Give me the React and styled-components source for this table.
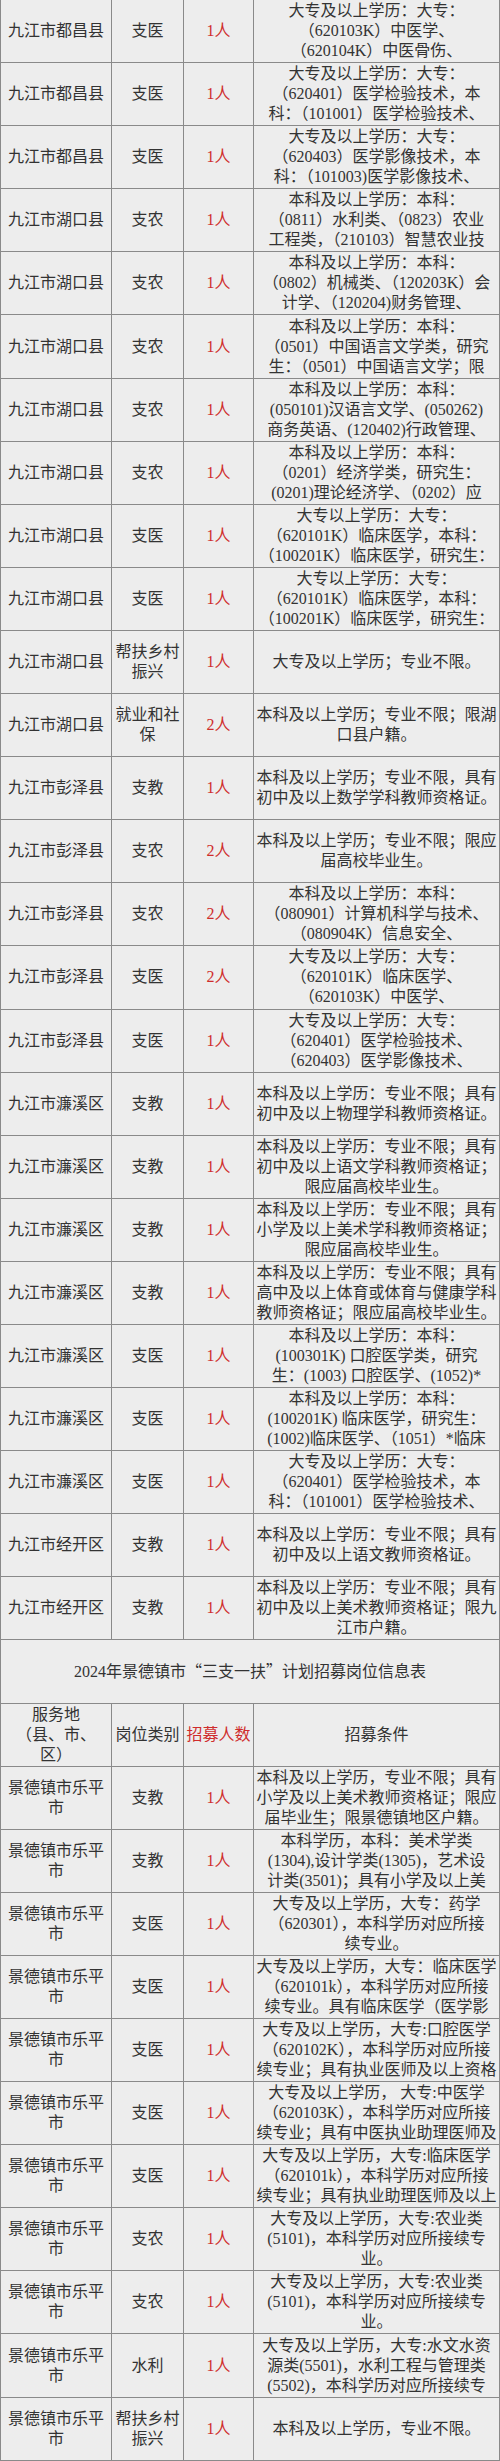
import React from 'react'
import styled, { createGlobalStyle } from 'styled-components'

const rowHeight = 2461 / 39
const lineColor = '#8a8a8a'
const paper = '#ededed'
const red = '#cf2c2c'

const GlobalStyle = createGlobalStyle`
    body {
        margin: 0;
        background: ${paper};
    }
`

const Table = styled.div`
    display: grid;
    grid-template-columns: 112px 72px 70px 246px;
    grid-auto-rows: ${rowHeight}px;
    width: 500px;
    background: ${paper};
    color: #333;
    font-family: "Liberation Serif", "Noto Sans CJK SC", serif;
    font-size: 16px;
    line-height: 20px;
`

const Cell = styled.div`
    display: flex;
    flex-direction: column;
    align-items: center;
    justify-content: center;
    overflow: hidden;
    box-sizing: border-box;
    border-right: 1px solid ${lineColor};
    border-bottom: 1px solid ${lineColor};
    text-align: center;
`

const PlaceCell = styled(Cell)`
    border-left: 1px solid ${lineColor};
`

const TypeCell = styled(Cell)``

const CountCell = styled(Cell)`
    color: ${red};
`

const TermsCell = styled(Cell)`
    padding: 0 1px;
`

const TitleCell = styled(Cell)`
    grid-column: 1 / -1;
    border-left: 1px solid ${lineColor};
`

const Quote = styled.span`
    font-family: "Noto Sans CJK SC", sans-serif;
`

const Line = styled.span`
    display: block;
    white-space: nowrap;
`

const Lines = ({ text }) => (Array.isArray(text) ? text : [text]).map((t, i) => <Line key={i}>{t}</Line>)

const jj = (county) => `九江市${county}`
const lp = ['景德镇市乐平', '市']

const jiujiang = [
    { place: jj('都昌县'), type: '支医', count: '1人', terms: ['大专及以上学历：大专：', '（620103K）中医学、', '（620104K）中医骨伤、'] },
    { place: jj('都昌县'), type: '支医', count: '1人', terms: ['大专及以上学历：大专：', '（620401）医学检验技术，本', '科：（101001）医学检验技术、'] },
    { place: jj('都昌县'), type: '支医', count: '1人', terms: ['大专及以上学历：大专：', '（620403）医学影像技术，本', '科：（101003)医学影像技术、'] },
    { place: jj('湖口县'), type: '支农', count: '1人', terms: ['本科及以上学历：本科：', '（0811）水利类、（0823）农业', '工程类，（210103）智慧农业技'] },
    { place: jj('湖口县'), type: '支农', count: '1人', terms: ['本科及以上学历：本科：', '（0802）机械类、（120203K）会', '计学、（120204)财务管理、'] },
    { place: jj('湖口县'), type: '支农', count: '1人', terms: ['本科及以上学历：本科：', '（0501）中国语言文学类，研究', '生：（0501）中国语言文学；限'] },
    { place: jj('湖口县'), type: '支农', count: '1人', terms: ['本科及以上学历：本科：', '(050101)汉语言文学、(050262)', '商务英语、(120402)行政管理、'] },
    { place: jj('湖口县'), type: '支农', count: '1人', terms: ['本科及以上学历：本科：', '（0201）经济学类，研究生：', '(0201)理论经济学、（0202）应'] },
    { place: jj('湖口县'), type: '支医', count: '1人', terms: ['大专以上学历：大专：', '（620101K）临床医学，本科：', '（100201K）临床医学，研究生：'] },
    { place: jj('湖口县'), type: '支医', count: '1人', terms: ['大专以上学历：大专：', '（620101K）临床医学，本科：', '（100201K）临床医学，研究生：'] },
    { place: jj('湖口县'), type: ['帮扶乡村', '振兴'], count: '1人', terms: ['大专及以上学历；专业不限。'] },
    { place: jj('湖口县'), type: ['就业和社', '保'], count: '2人', terms: ['本科及以上学历；专业不限；限湖', '口县户籍。'] },
    { place: jj('彭泽县'), type: '支教', count: '1人', terms: ['本科及以上学历；专业不限，具有', '初中及以上数学学科教师资格证。'] },
    { place: jj('彭泽县'), type: '支农', count: '2人', terms: ['本科及以上学历；专业不限；限应', '届高校毕业生。'] },
    { place: jj('彭泽县'), type: '支农', count: '2人', terms: ['本科及以上学历：本科：', '（080901）计算机科学与技术、', '（080904K）信息安全、'] },
    { place: jj('彭泽县'), type: '支医', count: '2人', terms: ['大专及以上学历：大专：', '（620101K）临床医学、', '（620103K）中医学、'] },
    { place: jj('彭泽县'), type: '支医', count: '1人', terms: ['大专及以上学历：大专：', '（620401）医学检验技术、', '（620403）医学影像技术、'] },
    { place: jj('濂溪区'), type: '支教', count: '1人', terms: ['本科及以上学历：专业不限；具有', '初中及以上物理学科教师资格证。'] },
    { place: jj('濂溪区'), type: '支教', count: '1人', terms: ['本科及以上学历：专业不限；具有', '初中及以上语文学科教师资格证；', '限应届高校毕业生。'] },
    { place: jj('濂溪区'), type: '支教', count: '1人', terms: ['本科及以上学历：专业不限；具有', '小学及以上美术学科教师资格证；', '限应届高校毕业生。'] },
    { place: jj('濂溪区'), type: '支教', count: '1人', terms: ['本科及以上学历：专业不限；具有', '高中及以上体育或体育与健康学科', '教师资格证；限应届高校毕业生。'] },
    { place: jj('濂溪区'), type: '支医', count: '1人', terms: ['本科及以上学历：本科：', '(100301K) 口腔医学类，研究', '生：(1003) 口腔医学、(1052)*'] },
    { place: jj('濂溪区'), type: '支医', count: '1人', terms: ['本科及以上学历：本科：', '(100201K) 临床医学，研究生：', '(1002)临床医学、（1051）*临床'] },
    { place: jj('濂溪区'), type: '支医', count: '1人', terms: ['大专及以上学历：大专：', '（620401）医学检验技术，本', '科：（101001）医学检验技术、'] },
    { place: jj('经开区'), type: '支教', count: '1人', terms: ['本科及以上学历：专业不限；具有', '初中及以上语文教师资格证。'] },
    { place: jj('经开区'), type: '支教', count: '1人', terms: ['本科及以上学历：专业不限；具有', '初中及以上美术教师资格证；限九', '江市户籍。'] },
]

const header = { place: ['服务地', '（县、市、', '区）'], type: '岗位类别', count: '招募人数', terms: '招募条件' }

const jingdezhen = [
    { place: lp, type: '支教', count: '1人', terms: ['本科及以上学历，专业不限；具有', '小学及以上美术教师资格证；限应', '届毕业生；限景德镇地区户籍。'] },
    { place: lp, type: '支教', count: '1人', terms: ['本科学历，本科：美术学类', '(1304),设计学类(1305)，艺术设', '计类(3501)；具有小学及以上美'] },
    { place: lp, type: '支医', count: '1人', terms: ['大专及以上学历，大专：药学', '（620301），本科学历对应所接', '续专业。'] },
    { place: lp, type: '支医', count: '1人', terms: ['大专及以上学历，大专：临床医学', '（620101k），本科学历对应所接', '续专业。具有临床医学（医学影'] },
    { place: lp, type: '支医', count: '1人', terms: ['大专及以上学历，大专:口腔医学', '（620102K），本科学历对应所接', '续专业；具有执业医师及以上资格'] },
    { place: lp, type: '支医', count: '1人', terms: ['大专及以上学历， 大专:中医学', '（620103K），本科学历对应所接', '续专业；具有中医执业助理医师及'] },
    { place: lp, type: '支医', count: '1人', terms: ['大专及以上学历，大专:临床医学', '（620101k），本科学历对应所接', '续专业；具有执业助理医师及以上'] },
    { place: lp, type: '支农', count: '1人', terms: ['大专及以上学历，大专:农业类', '(5101)，本科学历对应所接续专', '业。'] },
    { place: lp, type: '支农', count: '1人', terms: ['大专及以上学历，大专:农业类', '(5101)，本科学历对应所接续专', '业。'] },
    { place: lp, type: '水利', count: '1人', terms: ['大专及以上学历，大专:水文水资', '源类(5501)，水利工程与管理类', '(5502)，本科学历对应所接续专'] },
    { place: lp, type: ['帮扶乡村', '振兴'], count: '1人', terms: ['本科及以上学历，专业不限。'] },
]

const Row = ({ row }) => (
    <>
        <PlaceCell><Lines text={row.place} /></PlaceCell>
        <TypeCell><Lines text={row.type} /></TypeCell>
        <CountCell><Lines text={row.count} /></CountCell>
        <TermsCell><Lines text={row.terms} /></TermsCell>
    </>
)

export default function App() {
    return (
        <>
            <GlobalStyle />
            <Table>
                {jiujiang.map((row, idx) => <Row key={`jj${idx}`} row={row} />)}
                <TitleCell>
                    <Line>2024年景德镇市<Quote>“</Quote>三支一扶<Quote>”</Quote>计划招募岗位信息表</Line>
                </TitleCell>
                <Row row={header} />
                {jingdezhen.map((row, idx) => <Row key={`jdz${idx}`} row={row} />)}
            </Table>
        </>
    )
}
